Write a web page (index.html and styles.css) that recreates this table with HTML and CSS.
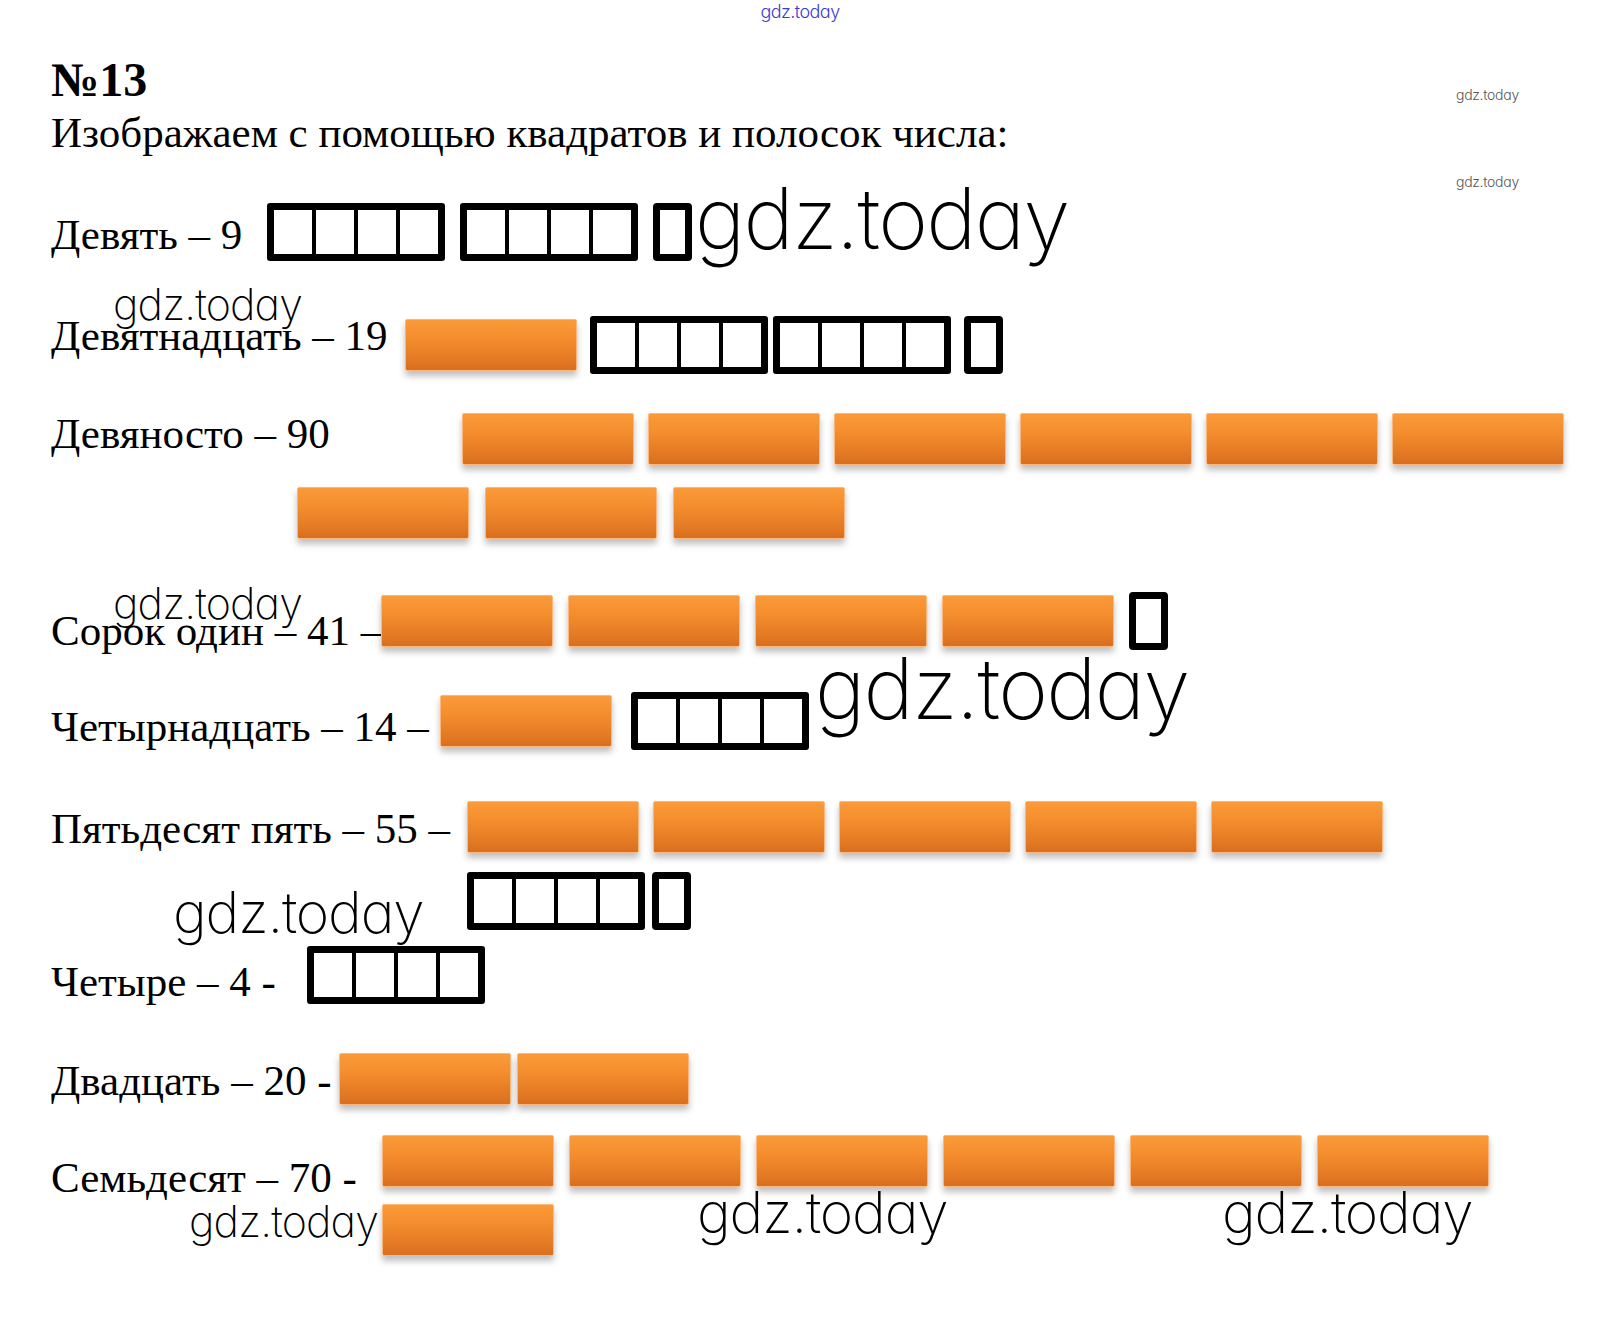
FILE: index.html
```html
<!DOCTYPE html>
<html lang="ru">
<head>
<meta charset="utf-8">
<title>№13</title>
<link rel="stylesheet" href="styles.css">
</head>
<body>
<div class="page">
  <div class="brand">gdz.today</div>
  <h1 class="title">№13</h1>
  <p class="lead">Изображаем с помощью квадратов и полосок числа:</p>

  <div class="row r1">
    <span class="label">Девять – 9</span>
    <div class="shapes">
      <div class="line g15">
        <div class="sq4"><i></i><i></i><i></i><i></i></div>
        <div class="sq4"><i></i><i></i><i></i><i></i></div>
        <div class="sq1"></div>
      </div>
    </div>
  </div>

  <div class="row r2">
    <span class="label">Девятнадцать – 19</span>
    <div class="shapes">
      <div class="line g2">
        <div class="bar"></div>
        <div class="sq4"><i></i><i></i><i></i><i></i></div>
        <div class="sq4 tight"><i></i><i></i><i></i><i></i></div>
        <div class="sq1"></div>
      </div>
    </div>
  </div>

  <div class="row r3">
    <span class="label">Девяносто – 90</span>
    <div class="shapes">
      <div class="line g14">
        <div class="bar"></div><div class="bar"></div><div class="bar"></div>
        <div class="bar"></div><div class="bar"></div><div class="bar"></div>
      </div>
    </div>
  </div>

  <div class="row r3b">
    <div class="shapes">
      <div class="line g16">
        <div class="bar"></div><div class="bar"></div><div class="bar"></div>
      </div>
    </div>
  </div>

  <div class="row r4">
    <span class="label">Сорок один – 41 –</span>
    <div class="shapes">
      <div class="line g15">
        <div class="bar"></div><div class="bar"></div><div class="bar"></div><div class="bar"></div>
        <div class="sq1"></div>
      </div>
    </div>
  </div>

  <div class="row r5">
    <span class="label">Четырнадцать – 14 –</span>
    <div class="shapes">
      <div class="line g19">
        <div class="bar"></div>
        <div class="sq4"><i></i><i></i><i></i><i></i></div>
      </div>
    </div>
  </div>

  <div class="row r6 multi">
    <span class="label">Пятьдесят пять – 55 –</span>
    <div class="shapes gap17">
      <div class="line g14">
        <div class="bar"></div><div class="bar"></div><div class="bar"></div>
        <div class="bar"></div><div class="bar"></div>
      </div>
      <div class="line g7">
        <div class="sq4"><i></i><i></i><i></i><i></i></div>
        <div class="sq1"></div>
      </div>
    </div>
  </div>

  <div class="row r7">
    <span class="label">Четыре – 4 -</span>
    <div class="shapes">
      <div class="line">
        <div class="sq4"><i></i><i></i><i></i><i></i></div>
      </div>
    </div>
  </div>

  <div class="row r8">
    <span class="label">Двадцать – 20 -</span>
    <div class="shapes">
      <div class="line g6">
        <div class="bar"></div><div class="bar"></div>
      </div>
    </div>
  </div>

  <div class="row r9 multi">
    <span class="label">Семьдесят – 70 -</span>
    <div class="shapes gap12">
      <div class="line g15">
        <div class="bar"></div><div class="bar"></div><div class="bar"></div>
        <div class="bar"></div><div class="bar"></div><div class="bar"></div>
      </div>
      <div class="line">
        <div class="bar"></div>
      </div>
    </div>
  </div>

  <span class="wm wm-tiny wm-t1">gdz.today</span>
  <span class="wm wm-tiny wm-t2">gdz.today</span>
  <span class="wm wm-xl wm-1">gdz.today</span>
  <span class="wm wm-s wm-2">gdz.today</span>
  <span class="wm wm-s wm-4">gdz.today</span>
  <span class="wm wm-xl wm-5">gdz.today</span>
  <span class="wm wm-m wm-6">gdz.today</span>
  <span class="wm wm-s wm-9a">gdz.today</span>
  <span class="wm wm-m wm-9b">gdz.today</span>
  <span class="wm wm-m wm-9c">gdz.today</span>
</div>
</body>
</html>
```

FILE: styles.css
```css
* { box-sizing: border-box; }
html, body { margin: 0; padding: 0; background: #fff; }
body { font-family: "Liberation Serif", "Times New Roman", serif; color: #000; }

.page {
  position: relative;
  width: 1600px;
  height: 1317px;
  overflow: hidden;
  padding-left: 51px;
}

.brand {
  height: 24px;
  line-height: 24px;
  margin-left: -51px;
  text-align: center;
  font-family: Inter, "Liberation Sans", sans-serif;
  font-weight: 300;
  font-feature-settings: "cv11" 1;
  font-size: 18px;
  letter-spacing: -0.03em;
  color: #3a3ad6;
}

.title {
  margin: 32px 0 0;
  font-size: 48px;
  line-height: 48px;
  font-weight: bold;
}

.lead {
  margin: 7px 0 0;
  font-size: 43px;
  line-height: 43px;
}

/* rows */
.row {
  display: flex;
  align-items: flex-start;
  height: 57px;
}
.row.multi { height: auto; }

.label {
  flex: none;
  font-size: 43px;
  line-height: 57px;
  white-space: nowrap;
}

.shapes { display: flex; flex-direction: column; }
.shapes.gap17 { gap: 17px; }
.shapes.gap12 { gap: 12px; }

.line { display: flex; align-items: center; height: 57px; }
.g2 { gap: 13px; }
.g6 { gap: 6px; }
.g7 { gap: 7px; }
.g14 { gap: 14px; }
.g15 { gap: 15px; }
.g16 { gap: 16px; }
.g19 { gap: 19px; }
.sq4.tight { margin-left: -8px; }

.r1 { margin-top: 49px; }
.r1 .label { margin-top: 3px; }
.r1 .shapes { margin-left: 25px; }

.r2 { margin-top: 56px; }
.r2 .label { margin-top: -9px; }
.r2 .shapes { margin-left: 17px; }

.r3 { margin-top: 37px; }
.r3 .label { margin-top: -5px; }
.r3 .shapes { margin-left: 132px; }

.r3b { margin-top: 17px; padding-left: 246px; }

.r4 { margin-top: 51px; }
.r4 .label { margin-top: 10px; }
.r4 .shapes { margin-left: -1px; }

.r5 { margin-top: 43px; }
.r5 .label { margin-top: 6px; }
.r5 .shapes { margin-left: 11px; }

.r6 { margin-top: 49px; }
.r6 .label { margin-top: 2px; }
.r6 .shapes { margin-left: 17px; }

.r7 { margin-top: 17px; }
.r7 .label { margin-top: 7px; }
.r7 .shapes { margin-left: 31px; }

.r8 { margin-top: 47px; }
.r8 .label { margin-top: 2px; }
.r8 .shapes { margin-left: 7px; }

.r9 { margin-top: 25px; }
.r9 .label { margin-top: 17px; }
.r9 .shapes { margin-left: 25px; }

/* shapes */
.bar {
  flex: none;
  width: 172px;
  height: 52px;
  border: 1px solid #fbb87a;
  border-radius: 2px;
  background: linear-gradient(to bottom, #fa9a38 0%, #f58e2e 35%, #e67d26 72%, #d96f1f 100%);
  box-shadow: 0 5px 6px rgba(60, 60, 70, 0.33);
}

.sq4 {
  flex: none;
  display: flex;
  width: 178px;
  height: 58px;
  border: 7px solid #000;
  border-radius: 3px;
  background: #fff;
}
.sq4 i { flex: 1; border-left: 4px solid #000; }
.sq4 i:first-child { border-left: 0; }

.sq1 {
  flex: none;
  width: 39px;
  height: 58px;
  border: 7px solid #000;
  border-radius: 4px;
  background: #fff;
}

/* watermarks */
.wm {
  position: absolute;
  white-space: nowrap;
  font-family: Inter, "Lato", "Liberation Sans", sans-serif;
  font-weight: 200;
  font-feature-settings: "cv11" 1;
  line-height: 1;
  letter-spacing: -0.02em;
  color: #000;
}
.wm-tiny { font-size: 14px; font-weight: 300; color: #555; left: 1456px; }
.wm-t1 { top: 88px; }
.wm-t2 { top: 175px; }
.wm-xl { font-size: 85px; }
.wm-m { font-size: 57px; }
.wm-s { font-size: 43px; }

.wm-1 { left: 695px; top: 176px; }
.wm-2 { left: 113px; top: 283px; }
.wm-4 { left: 113px; top: 582px; }
.wm-5 { left: 815px; top: 646px; }
.wm-6 { left: 173px; top: 884px; }
.wm-9a { left: 189px; top: 1200px; }
.wm-9b { left: 697px; top: 1184px; }
.wm-9c { left: 1222px; top: 1184px; }
```
